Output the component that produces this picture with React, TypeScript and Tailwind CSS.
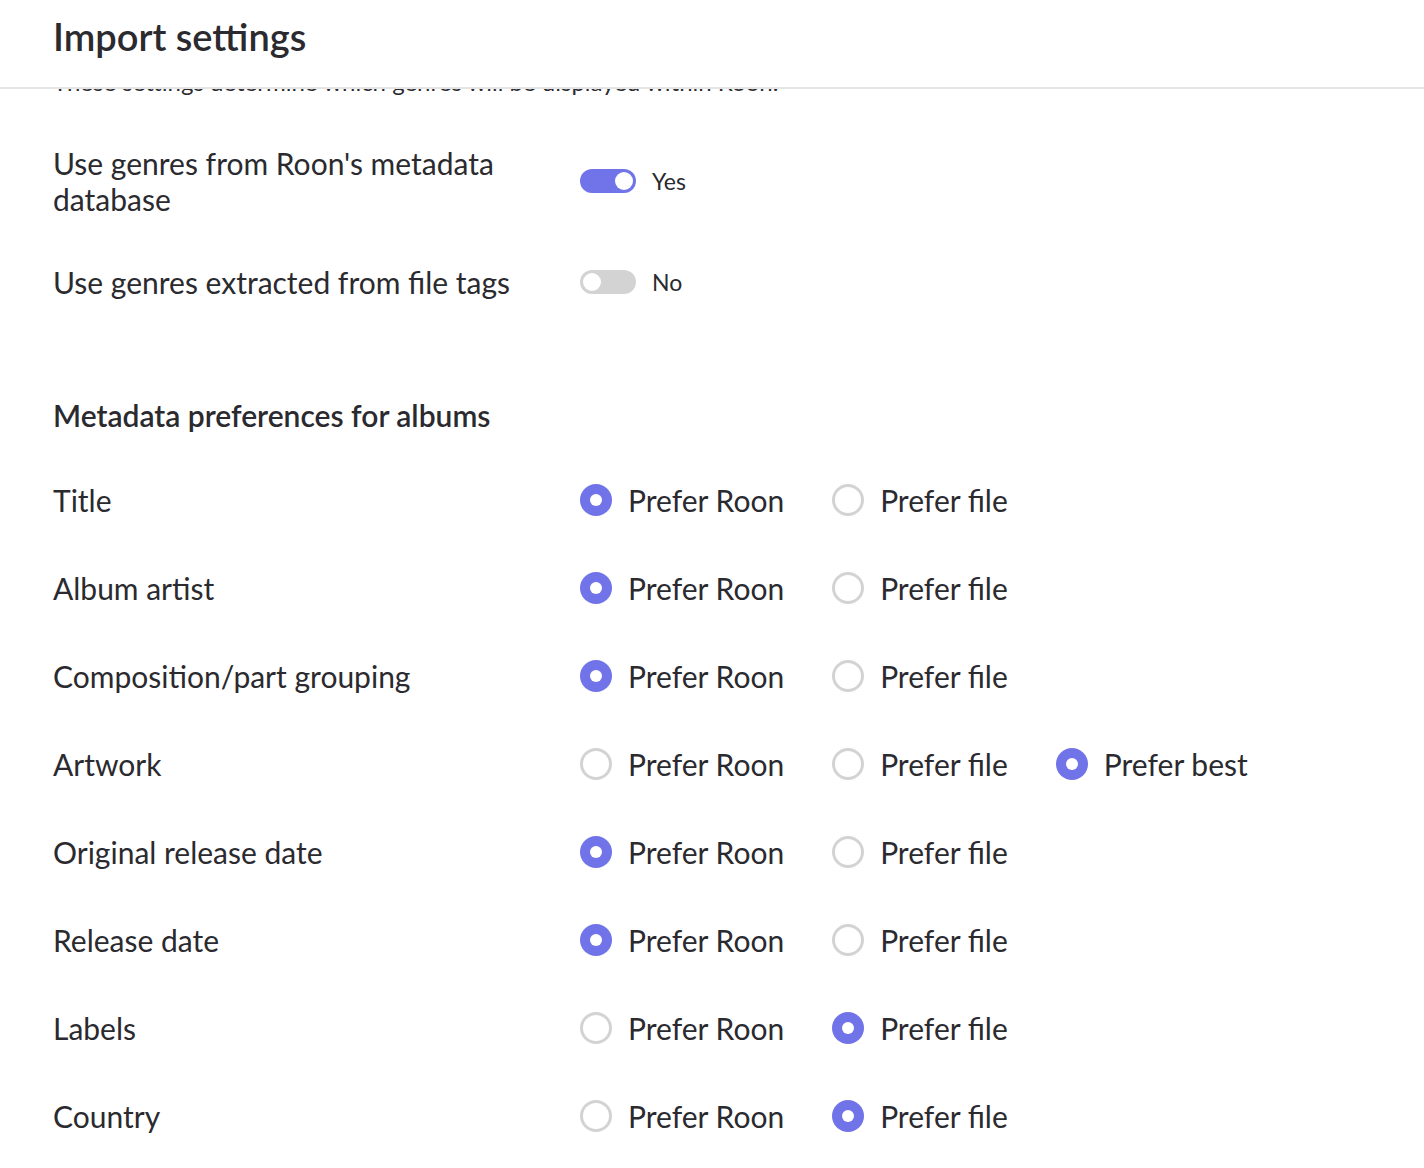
import React from 'react'

type Opt = 'roon' | 'file' | 'best'

const rows: { label: string; options: Opt[]; value: Opt }[] = [
  { label: 'Title', options: ['roon', 'file'], value: 'roon' },
  { label: 'Album artist', options: ['roon', 'file'], value: 'roon' },
  { label: 'Composition/part grouping', options: ['roon', 'file'], value: 'roon' },
  { label: 'Artwork', options: ['roon', 'file', 'best'], value: 'best' },
  { label: 'Original release date', options: ['roon', 'file'], value: 'roon' },
  { label: 'Release date', options: ['roon', 'file'], value: 'roon' },
  { label: 'Labels', options: ['roon', 'file'], value: 'file' },
  { label: 'Country', options: ['roon', 'file'], value: 'file' },
]

const optLabel: Record<Opt, string> = {
  roon: 'Prefer Roon',
  file: 'Prefer file',
  best: 'Prefer best',
}

function Radio({ checked, label }: { checked: boolean; label: string }) {
  return (
    <div className="mr-[48px] flex items-center">
      {checked ? (
        <span className="flex h-[32px] w-[32px] items-center justify-center rounded-full bg-[#7174e8]">
          <span className="h-[12px] w-[12px] rounded-full bg-white" />
        </span>
      ) : (
        <span className="h-[32px] w-[32px] rounded-full border-[3px] border-[#d3d3d3]" />
      )}
      <span className="ml-[16px] text-[30px] leading-[36px]">{label}</span>
    </div>
  )
}

function Toggle({ on }: { on: boolean }) {
  return (
    <div className="flex items-center">
      <span
        className={
          on
            ? 'flex h-[24px] w-[56px] items-center justify-end rounded-full bg-[#7174e8] px-[3px]'
            : 'flex h-[24px] w-[56px] items-center justify-start rounded-full bg-[#d3d3d3] px-[3px]'
        }
      >
        <span className="h-[18px] w-[18px] rounded-full bg-white" />
      </span>
      <span className="ml-[16px] text-[23px] leading-[30px]">{on ? 'Yes' : 'No'}</span>
    </div>
  )
}

export default function App() {
  return (
    <div className="h-[1168px] overflow-hidden bg-white font-['Lato',sans-serif] text-[#2a2a2f]">
      <header className="h-[89px] border-b-2 border-[#e4e4e4] px-[53px] pt-[13px]">
        <h1 className="text-[38px] font-semibold leading-[46px]">Import settings</h1>
      </header>
      <div className="overflow-hidden px-[53px]">
        <p className="-mt-[22px] text-[24px] leading-[30px]">
          These settings determine which genres will be displayed within Roon.
        </p>

        <div className="mt-[48px] flex items-center">
          <div className="w-[527px] pr-[20px] text-[30px] leading-[36px]">Use genres from Roon's metadata database</div>
          <Toggle on />
        </div>
        <div className="mt-[47px] flex items-center">
          <div className="w-[527px] text-[30px] leading-[36px]">Use genres extracted from file tags</div>
          <Toggle on={false} />
        </div>

        <h2 className="mt-[97px] text-[30px] font-semibold leading-[36px]">Metadata preferences for albums</h2>

        <div className="mt-[23px]">
          {rows.map((r) => (
            <div key={r.label} className="flex h-[88px] items-center">
              <div className="w-[527px] text-[30px] leading-[36px]">{r.label}</div>
              {r.options.map((o) => (
                <Radio key={o} checked={o === r.value} label={optLabel[o]} />
              ))}
            </div>
          ))}
        </div>
      </div>
    </div>
  )
}
